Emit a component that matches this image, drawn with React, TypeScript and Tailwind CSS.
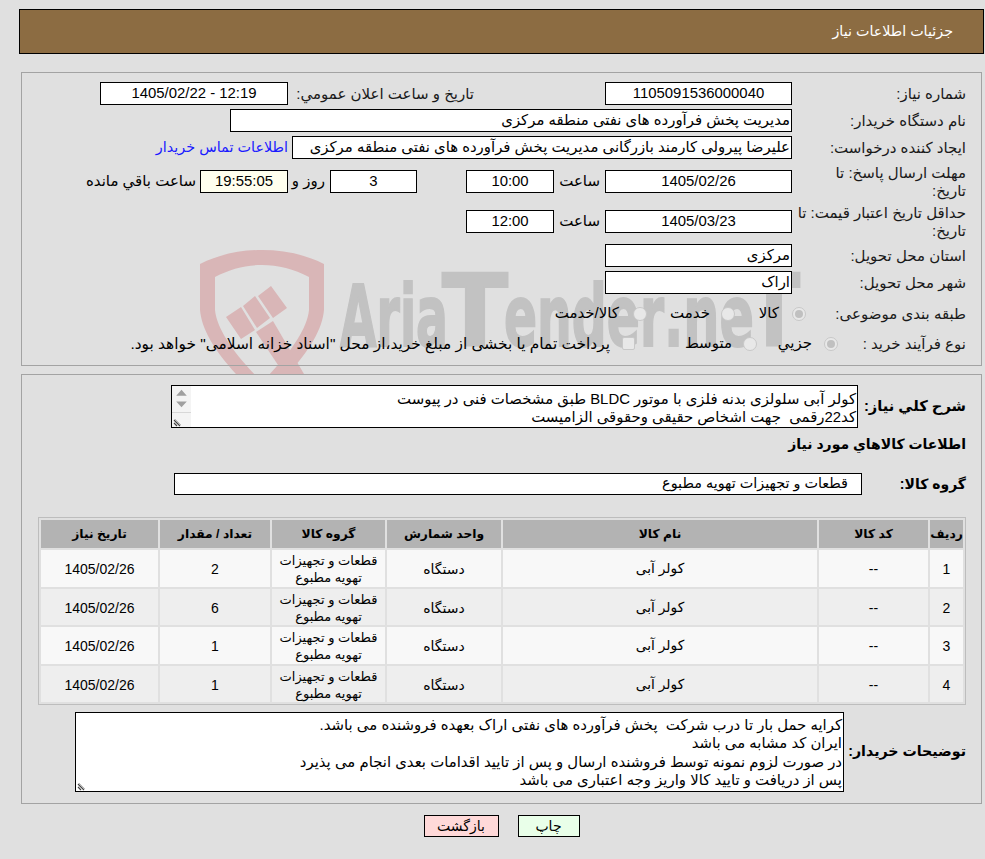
const FONT = "font-['Liberation_Sans','DejaVu_Sans',sans-serif]";

function Field({
  className,
  short,
  tint,
  children,
}: {
  className: string;
  short?: boolean;
  tint?: boolean;
  children?: React.ReactNode;
}) {
  return (
    <div
      className={`relative flex shrink-0 items-center border border-black ${short ? "h-[22px] text-[14.4px]" : "h-[23px] text-[14.9px]"} ${tint ? "bg-[#ffffee]" : "bg-white"} ${className}`}
    >
      {children}
    </div>
  );
}

function Label({ children, className = "w-[174px]" }: { children: React.ReactNode; className?: string }) {
  return <div className={`relative shrink-0 text-[15px] leading-[18px] text-[#1a1a1a] ${className}`}>{children}</div>;
}

function Radio({ checked, className = "" }: { checked?: boolean; className?: string }) {
  return (
    <span className={`flex size-[14px] shrink-0 items-center justify-center rounded-full border border-[#c8c8c8] bg-[#e8e8e8] ${className}`}>
      {checked && <span className="size-[8px] rounded-full bg-[#c0c0c0]" />}
    </span>
  );
}

function Grip() {
  return (
    <svg width="11" height="11" viewBox="0 0 11 11" className="absolute bottom-0 left-[1px]">
      <path d="M1 4 L7 10 M1 7 L4 10" stroke="#444" strokeWidth="1.2" fill="none" />
      <path d="M2 3 L8 9" stroke="#bbb" strokeWidth="1" fill="none" />
    </svg>
  );
}

const logoParts = [
  { text: "Aria", x: 340, len: 108, size: 86 },
  { text: "T", x: 442, len: 66, size: 100 },
  { text: "ender", x: 504, len: 160, size: 86 },
  { text: ".ne", x: 664, len: 90, size: 86 },
  { text: "T", x: 748, len: 52, size: 100 },
];

function Watermark() {
  return (
    <svg
      className="pointer-events-none absolute left-0 top-0"
      width="985"
      height="374"
      viewBox="0 0 985 374"
      aria-hidden="true"
    >
      <path
        d="M200 264 C220 254 240 250 262 250 C284 250 304 254 324 264 L324 310 C322 335 300 365 262 400 C224 365 202 335 200 310 Z M215 277 L215 310 C217 330 235 355 262 382 C289 355 307 330 309 310 L309 277 C294 269 278 265 262 265 C246 265 230 269 215 277 Z"
        fill="#d9b6b7"
        fillRule="evenodd"
      />
      <path d="M226 317 L241 307 L255 330 L241 339 Z M243 306 L255 296 L270 318 L257 328 Z M258 296 L271 286 L287 308 L273 318 Z" fill="#d9b6b7" />
      <path d="M256 332 L273 321 L304 374 L284 374 Z" fill="#d9b6b7" />
      {logoParts.map((p) => (
        <text
          key={p.x}
          x={p.x}
          y="346"
          textLength={p.len}
          lengthAdjust="spacingAndGlyphs"
          fontFamily="'DejaVu Sans', sans-serif"
          fontWeight="700"
          fontSize={p.size}
          fill="#c2c2c2"
          stroke="#c2c2c2"
          strokeWidth="2"
          direction="ltr"
        >
          {p.text}
        </text>
      ))}
    </svg>
  );
}

const rows = [
  { id: 1, qty: 2 },
  { id: 2, qty: 6 },
  { id: 3, qty: 1 },
  { id: 4, qty: 1 },
];

export default function App() {
  return (
    <div dir="rtl" className={`relative h-[859px] overflow-hidden bg-[#e0e0e0] ${FONT}`}>
      <Watermark />

      <div className="relative pl-[19px] pr-px pt-[9px]">
        <div className="flex h-[45px] items-center border border-black bg-[#8c6c42] pr-[30px] text-[14.3px] text-white">
          جزئیات اطلاعات نیاز
        </div>
      </div>

      {/* فرم بالا */}
      <section className="relative ml-[21px] mr-[3px] mt-[18px] h-[294px] border border-[#a3a3a3] pr-[15px] pt-[9px]">
        <div className="flex h-[23px] items-center">
          <Label>شماره نیاز:</Label>
          <Field className="w-[187px] justify-center">1105091536000040</Field>
          <Label className="mr-[131px] w-[186px] whitespace-nowrap">تاريخ و ساعت اعلان عمومي:</Label>
          <Field className="w-[188px] justify-center">
            <span dir="ltr">1405/02/22 - 12:19</span>
          </Field>
        </div>

        <div className="mt-[4px] flex h-[23px] items-center">
          <Label>نام دستگاه خریدار:</Label>
          <Field className="w-[562px] pr-[1px]">مدیریت پخش فرآورده های نفتی منطقه مرکزی</Field>
        </div>

        <div className="mt-[4px] flex h-[23px] items-center">
          <Label>ایجاد کننده درخواست:</Label>
          <Field className="w-[500px] pr-[1px]">علیرضا پیرولی کارمند بازرگانی مدیریت پخش فرآورده های نفتی منطقه مرکزی</Field>
          <a className="mr-[4px] whitespace-nowrap text-[14.4px] text-[#1a1aff]">اطلاعات تماس خریدار</a>
        </div>

        <div className="mt-[5px] flex h-[35px] items-center">
          <Label className="w-[174px] pl-[20px]">مهلت ارسال پاسخ: تا تاریخ:</Label>
          <Field className="w-[187px] justify-center">1405/02/26</Field>
          <span className="w-[51px] shrink-0 pr-[5px] text-[15px]">ساعت</span>
          <Field className="w-[88px] justify-center">10:00</Field>
          <span className="w-[49px] shrink-0" />
          <Field className="w-[87px] justify-center">3</Field>
          <span className="w-[42px] shrink-0 pr-[5px] text-[15px]">روز و</span>
          <Field tint className="w-[88px] justify-center">19:55:05</Field>
          <span className="whitespace-nowrap pr-[4px] text-[15px]">ساعت باقي مانده</span>
        </div>

        <div className="mt-[5px] flex h-[35px] items-center">
          <Label className="w-[174px] pl-[4px]">حداقل تاریخ اعتبار قیمت: تا تاریخ:</Label>
          <Field className="w-[187px] justify-center">1405/03/23</Field>
          <span className="w-[51px] shrink-0 pr-[5px] text-[15px]">ساعت</span>
          <Field className="w-[88px] justify-center">12:00</Field>
        </div>

        <div className="mt-[5px] flex h-[23px] items-center">
          <Label>استان محل تحویل:</Label>
          <Field className="w-[187px] pr-[1px]">مرکزی</Field>
        </div>

        <div className="mt-[4px] flex h-[23px] items-center">
          <Label>شهر محل تحویل:</Label>
          <Field className="w-[187px] pr-[1px]">اراک</Field>
        </div>

        <div className="mt-[8px] flex h-[23px] items-center text-[15px]">
          <Label className="w-[160px]">طبقه بندی موضوعی:</Label>
          <Radio checked className="ml-[13px]" />
          <span className="w-[44px] shrink-0">کالا</span>
          <Radio className="ml-[11px]" />
          <span className="w-[63px] shrink-0">خدمت</span>
          <Radio className="ml-[14px]" />
          <span className="shrink-0">کالا/خدمت</span>
        </div>

        <div className="mt-[7px] flex h-[23px] items-center text-[15px]">
          <Label className="w-[128px]">نوع فرآیند خرید :</Label>
          <Radio checked className="ml-[12px]" />
          <span className="w-[55px] shrink-0">جزيي</span>
          <Radio className="ml-[11px]" />
          <span className="w-[97px] shrink-0">متوسط</span>
          <span className="ml-[12px] size-[13px] shrink-0 rounded-[2px] border border-[#c8c8c8] bg-[#e8e8e8]" />
          <span className="whitespace-nowrap text-[15.4px]">پرداخت تمام یا بخشی از مبلغ خرید،از محل "اسناد خزانه اسلامی" خواهد بود.</span>
        </div>
      </section>

      {/* شرح و جدول کالاها */}
      <section className="relative ml-[21px] mr-[3px] mt-[8px] h-[430px] border border-[#a3a3a3] bg-[#e0e0e0] pr-[15px] pt-[10px]">
        <div className="flex items-center">
          <div className="w-[108px] shrink-0 whitespace-nowrap text-[14.7px] font-bold">شرح كلي نياز:</div>
          <div className="relative h-[43px] w-[687px] shrink-0 whitespace-pre-wrap border border-black bg-white pr-px pt-[4px] text-[14.9px] leading-[18px]">
            <p>کولر آبی سلولزی بدنه فلزی با موتور BLDC طبق مشخصات فنی در پیوست</p>
            <p>کد22رقمی  جهت اشخاص حقیقی وحقوقی الزامیست</p>
            <div className="absolute bottom-0 left-0 top-0 w-[19px] bg-[#f4f4f4]">
              <svg width="19" height="27" viewBox="0 0 19 27" className="border-b border-[#d8d8d8]">
                <path d="M4 10 L15 10 L9.5 4 Z M4 16 L15 16 L9.5 22 Z" fill="#a0a0a0" />
              </svg>
              <Grip />
            </div>
          </div>
        </div>

        <h2 className="mt-[6px] h-[21px] text-[14px] font-bold leading-[21px]">اطلاعات كالاهاي مورد نياز</h2>

        <div className="mt-[18px] flex items-center">
          <div className="w-[104px] shrink-0 text-[14px] font-bold">گروه کالا:</div>
          <Field short className="w-[688px] pr-[13px]">قطعات و تجهیزات تهویه مطبوع</Field>
        </div>

        <div className="ml-[16px] mt-[22px]">
          <table className="w-full table-fixed border-separate border-spacing-[2px] border border-[#bdbdbd] text-center text-[14px]">
            <colgroup>
              <col className="w-[33px]" />
              <col className="w-[109px]" />
              <col className="w-[314px]" />
              <col className="w-[114px]" />
              <col className="w-[113px]" />
              <col className="w-[110px]" />
              <col />
            </colgroup>
            <thead>
              <tr className="h-[28px] bg-[#b3b3b3] text-[12.3px]">
                <th className="p-0 font-bold">ردیف</th>
                <th className="p-0 font-bold">کد کالا</th>
                <th className="p-0 font-bold">نام کالا</th>
                <th className="p-0 font-bold">واحد شمارش</th>
                <th className="p-0 font-bold">گروه کالا</th>
                <th className="p-0 font-bold">تعداد / مقدار</th>
                <th className="p-0 font-bold">تاریخ نیاز</th>
              </tr>
            </thead>
            <tbody>
              {rows.map((r) => (
                <tr key={r.id} className={r.id % 2 ? "h-[37px] bg-[#f8f8f8]" : "h-[36px] bg-[#eeeeee]"}>
                  <td className="p-0 pt-[2px]">{r.id}</td>
                  <td className="p-0 pt-[2px]">--</td>
                  <td className="p-0 pt-[2px] text-[13.8px]">کولر آبی</td>
                  <td className="p-0 pt-[2px]">دستگاه</td>
                  <td className="p-0 pt-px text-[13px] leading-[17px]">قطعات و تجهیزات<br />تهویه مطبوع</td>
                  <td className="p-0 pt-[2px]">{r.qty}</td>
                  <td className="p-0 pt-[2px]">1405/02/26</td>
                </tr>
              ))}
            </tbody>
          </table>
        </div>

        <div className="mt-[7px] flex items-center">
          <div className="w-[122px] shrink-0 whitespace-nowrap text-[14.2px] font-bold">توضیحات خریدار:</div>
          <div className="relative h-[80px] w-[769px] shrink-0 whitespace-pre-wrap border border-black bg-white pr-px pt-[3px] text-[14.9px] leading-[18.4px]">
            <p>کرایه حمل بار تا درب شرکت  پخش فرآورده های نفتی اراک بعهده فروشنده می باشد.</p>
            <p>ایران کد مشابه می باشد</p>
            <p>در صورت لزوم نمونه توسط فروشنده ارسال و پس از تایید اقدامات بعدی انجام می پذیرد</p>
            <p>پس از دریافت و تایید کالا واریز وجه اعتباری می باشد</p>
            <Grip />
          </div>
        </div>
      </section>

      <div className="relative mt-[11px] flex justify-center gap-[19px] pl-[18px]">
        <button className="h-[22px] w-[62px] border border-black bg-[#e9ffe9] text-[14px]">چاپ</button>
        <button className="h-[22px] w-[75px] border border-black bg-[#ffd9d9] text-[14px]">بازگشت</button>
      </div>
    </div>
  );
}
